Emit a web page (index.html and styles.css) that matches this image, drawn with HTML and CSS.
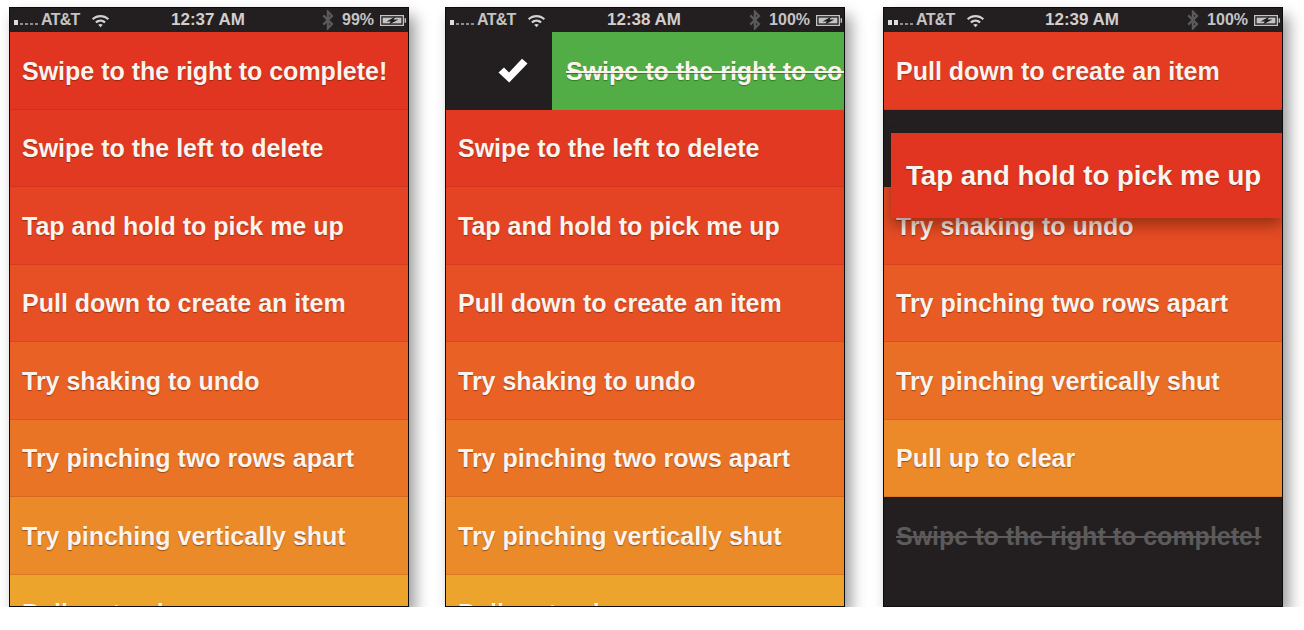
FILE: index.html
```html
<!DOCTYPE html>
<html lang="en">
<head>
    <meta charset="UTF-8">
    <meta name="viewport" content="width=device-width, initial-scale=1.0">
    <title>Clear gestures</title>
    <link rel="stylesheet" href="styles.css">
</head>
<body>
    <svg class="defs" width="0" height="0">
        <symbol id="wifi" viewBox="0 0 20 15">
            <path d="M1 5.4C6 .6 14 .6 19 5.4L17.5 7C13.2 3 6.8 3 2.5 7Z"/>
            <path d="M4.4 8.7C7.6 5.7 12.4 5.7 15.6 8.7L14 10.4C11.6 8.2 8.4 8.2 6 10.4Z"/>
            <path d="M7.6 12C8.9 10.8 11.1 10.8 12.4 12L10 14.6Z"/>
        </symbol>
        <symbol id="bluetooth" viewBox="0 0 10 17">
            <path d="M1 4.6L8.4 12 4.9 15.6V1.4L8.4 5 1 12.4" fill="none" stroke="currentColor" stroke-width="1.9"/>
        </symbol>
        <symbol id="battery" viewBox="0 0 26 11">
            <path d="M0 0H24V11H0ZM1.3 1.3V9.7H22.7V1.3Z" fill-rule="evenodd"/>
            <path d="M24.6 3.2H26V7.8H24.6Z"/>
            <path d="M2.6 2.6H21.4V8.4H2.6Z"/>
            <path fill="#231f20" d="M15.5 1.6L6.5 6.4H10.8L9 9.6 18.5 4.6H13.6Z"/>
        </symbol>
    </svg>

    <div class="phones">
        <div class="phone">
            <div class="status">
                <div class="status-left">
                    <span class="signal"><i class="on"></i><i></i><i></i><i></i><i></i></span>
                    <span class="carrier">AT&amp;T</span>
                    <svg class="wifi"><use href="#wifi"/></svg>
                </div>
                <div class="time">12:37 AM</div>
                <div class="status-right">
                    <svg class="bt"><use href="#bluetooth"/></svg>
                    <span>99%</span>
                    <svg class="battery"><use href="#battery"/></svg>
                </div>
            </div>
            <div class="list">
                <div class="row c1">Swipe to the right to complete!</div>
                <div class="row c2">Swipe to the left to delete</div>
                <div class="row c3">Tap and hold to pick me up</div>
                <div class="row c4">Pull down to create an item</div>
                <div class="row c5">Try shaking to undo</div>
                <div class="row c6">Try pinching two rows apart</div>
                <div class="row c7">Try pinching vertically shut</div>
                <div class="row c8">Pull up to clear</div>
            </div>
        </div>

        <div class="phone">
            <div class="status">
                <div class="status-left">
                    <span class="signal"><i class="on"></i><i></i><i></i><i></i><i></i></span>
                    <span class="carrier">AT&amp;T</span>
                    <svg class="wifi"><use href="#wifi"/></svg>
                </div>
                <div class="time">12:38 AM</div>
                <div class="status-right">
                    <svg class="bt"><use href="#bluetooth"/></svg>
                    <span>100%</span>
                    <svg class="battery"><use href="#battery"/></svg>
                </div>
            </div>
            <div class="list">
                <div class="row swiped">
                    <div class="swipe-back">
                        <svg class="check" viewBox="0 0 30 25"><path d="M0.5 14.5L6 9.5 11 14.5 24 0.8 29.5 5.6 11.2 24.6Z"/></svg>
                    </div>
                    <div class="swipe-front">Swipe to the right to complete!</div>
                </div>
                <div class="row c2">Swipe to the left to delete</div>
                <div class="row c3">Tap and hold to pick me up</div>
                <div class="row c4">Pull down to create an item</div>
                <div class="row c5">Try shaking to undo</div>
                <div class="row c6">Try pinching two rows apart</div>
                <div class="row c7">Try pinching vertically shut</div>
                <div class="row c8">Pull up to clear</div>
            </div>
        </div>

        <div class="phone">
            <div class="status">
                <div class="status-left">
                    <span class="signal"><i class="on"></i><i class="on"></i><i></i><i></i><i></i></span>
                    <span class="carrier">AT&amp;T</span>
                    <svg class="wifi"><use href="#wifi"/></svg>
                </div>
                <div class="time">12:39 AM</div>
                <div class="status-right">
                    <svg class="bt"><use href="#bluetooth"/></svg>
                    <span>100%</span>
                    <svg class="battery"><use href="#battery"/></svg>
                </div>
            </div>
            <div class="list">
                <div class="row d1">Pull down to create an item</div>
                <div class="row empty"></div>
                <div class="row d2">Try shaking to undo</div>
                <div class="row d3">Try pinching two rows apart</div>
                <div class="row d4">Try pinching vertically shut</div>
                <div class="row d5">Pull up to clear</div>
                <div class="row done">Swipe to the right to complete!</div>
                <div class="picked">Tap and hold to pick me up</div>
            </div>
        </div>
    </div>
</body>
</html>
```

FILE: styles.css
```css
body {
    margin: 0;
    background-color: #fff;
    font-family: "Liberation Sans", Arial, sans-serif;
}
.defs {
    display: block;
    height: 0;
}
.phones {
    display: flex;
    padding: 7px 0 0 9px;
}
.phone {
    flex: none;
    width: 400px;
    height: 600px;
    box-sizing: border-box;
    border: 1px solid #0c0c0c;
    background-color: #231f20;
    box-shadow: 6px 9px 14px rgba(0, 0, 0, 0.4);
    display: flex;
    flex-direction: column;
    margin-right: 36px;
}
.phone:nth-child(2) {
    margin-right: 38px;
}

/* status bar */
.status {
    height: 24px;
    flex: none;
    display: flex;
    align-items: center;
    padding: 0 2px 0 4px;
    color: #c4c4c4;
    font-size: 16px;
    font-weight: bold;
}
.status-left,
.status-right {
    flex: 1;
    display: flex;
    align-items: center;
}
.status-right {
    justify-content: flex-end;
}
.carrier {
    letter-spacing: -0.7px;
}
.time {
    font-size: 17px;
    color: #cfcfcf;
    margin-left: -4px;
}
.signal {
    display: flex;
    align-items: flex-end;
    gap: 2px;
    height: 7px;
    margin: 3px 3px 0 0;
}
.signal i {
    width: 3px;
    height: 2px;
    background-color: #8e8e8e;
}
.signal .on {
    width: 4px;
    height: 5px;
    background-color: #ddd;
}
.wifi {
    width: 19px;
    height: 15px;
    margin-left: 11px;
    fill: #d2d2d2;
}
.bt {
    width: 12px;
    height: 20px;
    margin-right: 8px;
    color: #5a5a5a;
}
.battery {
    width: 26px;
    height: 11px;
    margin-left: 6px;
    fill: #c4c4c4;
}

/* rows */
.list {
    flex: 1;
    overflow: hidden;
    position: relative;
}
.row {
    height: 77.5px;
    box-sizing: border-box;
    padding: 2px 0 0 12px;
    display: flex;
    align-items: center;
    color: #fbf3ee;
    font-size: 25px;
    font-weight: bold;
    white-space: nowrap;
    border-bottom: 1px solid rgba(120, 30, 0, 0.15);
    text-shadow: 0 1px 1px rgba(90, 30, 0, 0.55);
}
.c1 { background-color: #e13521; }
.c2 { background-color: #e23a22; }
.c3 { background-color: #e44423; }
.c4 { background-color: #e75024; }
.c5 { background-color: #e96125; }
.c6 { background-color: #e97426; }
.c7 { background-color: #ea8a29; }
.c8 { background-color: #eca42c; }

.d1 { background-color: #e43c23; }
.d2 { background-color: #e64c24; }
.d3 { background-color: #e85b25; }
.d4 { background-color: #ea6f26; }
.d5 { background-color: #ec8a29; }

.swiped {
    padding: 0;
    border: 0;
    background-color: #231f20;
}
.swipe-back {
    width: 106px;
    flex: none;
    display: flex;
    justify-content: flex-end;
    padding-right: 24px;
    box-sizing: border-box;
}
.check {
    width: 30px;
    height: 25px;
    fill: #fff;
}
.swipe-front {
    flex: 1;
    min-width: 0;
    height: 100%;
    display: flex;
    align-items: center;
    padding: 2px 0 0 14px;
    box-sizing: border-box;
    overflow: hidden;
    background-color: #53ad46;
    text-decoration: line-through;
    text-decoration-thickness: 2px;
    text-shadow: 0 1px 1px rgba(20, 70, 10, 0.5);
}

.empty {
    border: 0;
    background-color: #231f20;
}
.done {
    border: 0;
    height: 78px;
    padding-top: 0;
    background-color: #231f20;
    color: #5c5a5a;
    text-decoration: line-through;
    text-decoration-thickness: 2px;
    text-shadow: none;
}

/* row being dragged, lies over the list */
.picked {
    position: absolute;
    left: 7px;
    right: 0;
    top: 101px;
    height: 85px;
    padding-left: 15px;
    display: flex;
    align-items: center;
    background-color: #e13521;
    color: #fbf3ee;
    font-size: 27.6px;
    font-weight: bold;
    white-space: nowrap;
    text-shadow: 0 1px 1px rgba(90, 30, 0, 0.55);
    box-shadow: 0 7px 14px rgba(60, 10, 0, 0.45);
}
```
